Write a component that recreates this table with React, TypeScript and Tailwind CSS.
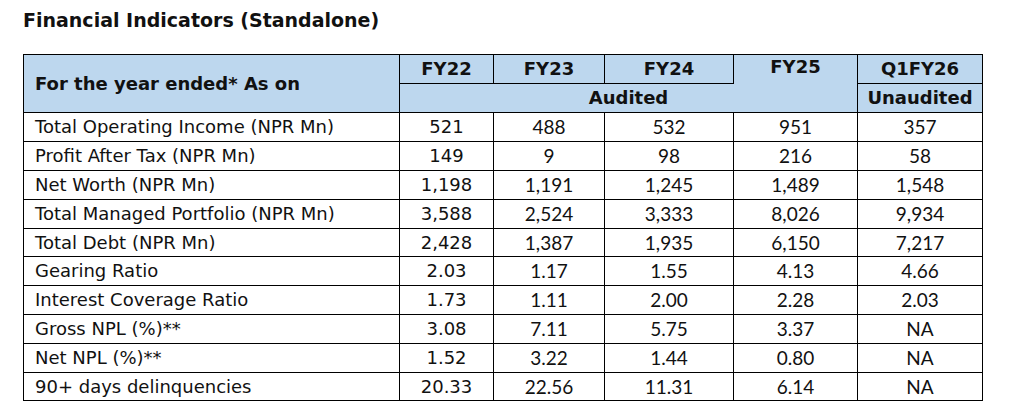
const rows: [string, string, string, string, string, string][] = [
  ["Total Operating Income (NPR Mn)", "521", "488", "532", "951", "357"],
  ["Profit After Tax (NPR Mn)", "149", "9", "98", "216", "58"],
  ["Net Worth (NPR Mn)", "1,198", "1,191", "1,245", "1,489", "1,548"],
  ["Total Managed Portfolio (NPR Mn)", "3,588", "2,524", "3,333", "8,026", "9,934"],
  ["Total Debt (NPR Mn)", "2,428", "1,387", "1,935", "6,150", "7,217"],
  ["Gearing Ratio", "2.03", "1.17", "1.55", "4.13", "4.66"],
  ["Interest Coverage Ratio", "1.73", "1.11", "2.00", "2.28", "2.03"],
  ["Gross NPL (%)**", "3.08", "7.11", "5.75", "3.37", "NA"],
  ["Net NPL (%)**", "1.52", "3.22", "1.44", "0.80", "NA"],
  ["90+ days delinquencies", "20.33", "22.56", "11.31", "6.14", "NA"],
]

export default function App() {
  return (
    <div className="h-[419px] w-[1018px] bg-white pt-[7px] pl-[23px] font-['DejaVu_Sans',Verdana,sans-serif] text-[#111]">
      <h1 className="text-[19px] font-bold leading-[26px]">Financial Indicators (Standalone)</h1>

      {/* separate borders so the FY25 cell can drop its bottom rule */}
      <table className="mt-[21px] w-[960px] table-fixed border-separate border-spacing-0 border-l border-t border-black">
        <colgroup>
          <col className="w-[376px]" />
          <col className="w-[94px]" />
          <col className="w-[111px]" />
          <col className="w-[129px]" />
          <col className="w-[124px]" />
          <col className="w-[125px]" />
        </colgroup>
        <thead className="bg-[#bdd7ee] text-[18px] leading-[22px] font-bold">
          <tr className="h-[29px]">
            <th rowSpan={2} className="border-r border-b border-black pl-[11px] text-left font-bold">
              For the year ended* As on
            </th>
            <th className="border-r border-b border-black">FY22</th>
            <th className="border-r border-b border-black">FY23</th>
            <th className="border-r border-b border-black">FY24</th>
            <th className="border-r border-black pt-[1px] align-top">FY25</th>
            <th className="border-r border-b border-black">Q1FY26</th>
          </tr>
          <tr className="h-[29px]">
            <th colSpan={4} className="border-r border-b border-black">Audited</th>
            <th className="border-r border-b border-black">Unaudited</th>
          </tr>
        </thead>
        <tbody className="text-[18px] leading-[22px]">
          {rows.map((r, idx) => (
            <tr key={r[0]} className={idx % 5 === 4 ? "h-[28px]" : "h-[29px]"}>
              <td className="border-r border-b border-black pl-[11px]">{r[0]}</td>
              <td className="border-r border-b border-black text-center">{r[1]}</td>
              {r.slice(2).map((v, i) => (
                <td key={i} className="border-r border-b border-black text-center font-['Lato',sans-serif] text-[19px]">
                  {v}
                </td>
              ))}
            </tr>
          ))}
        </tbody>
      </table>
    </div>
  )
}
